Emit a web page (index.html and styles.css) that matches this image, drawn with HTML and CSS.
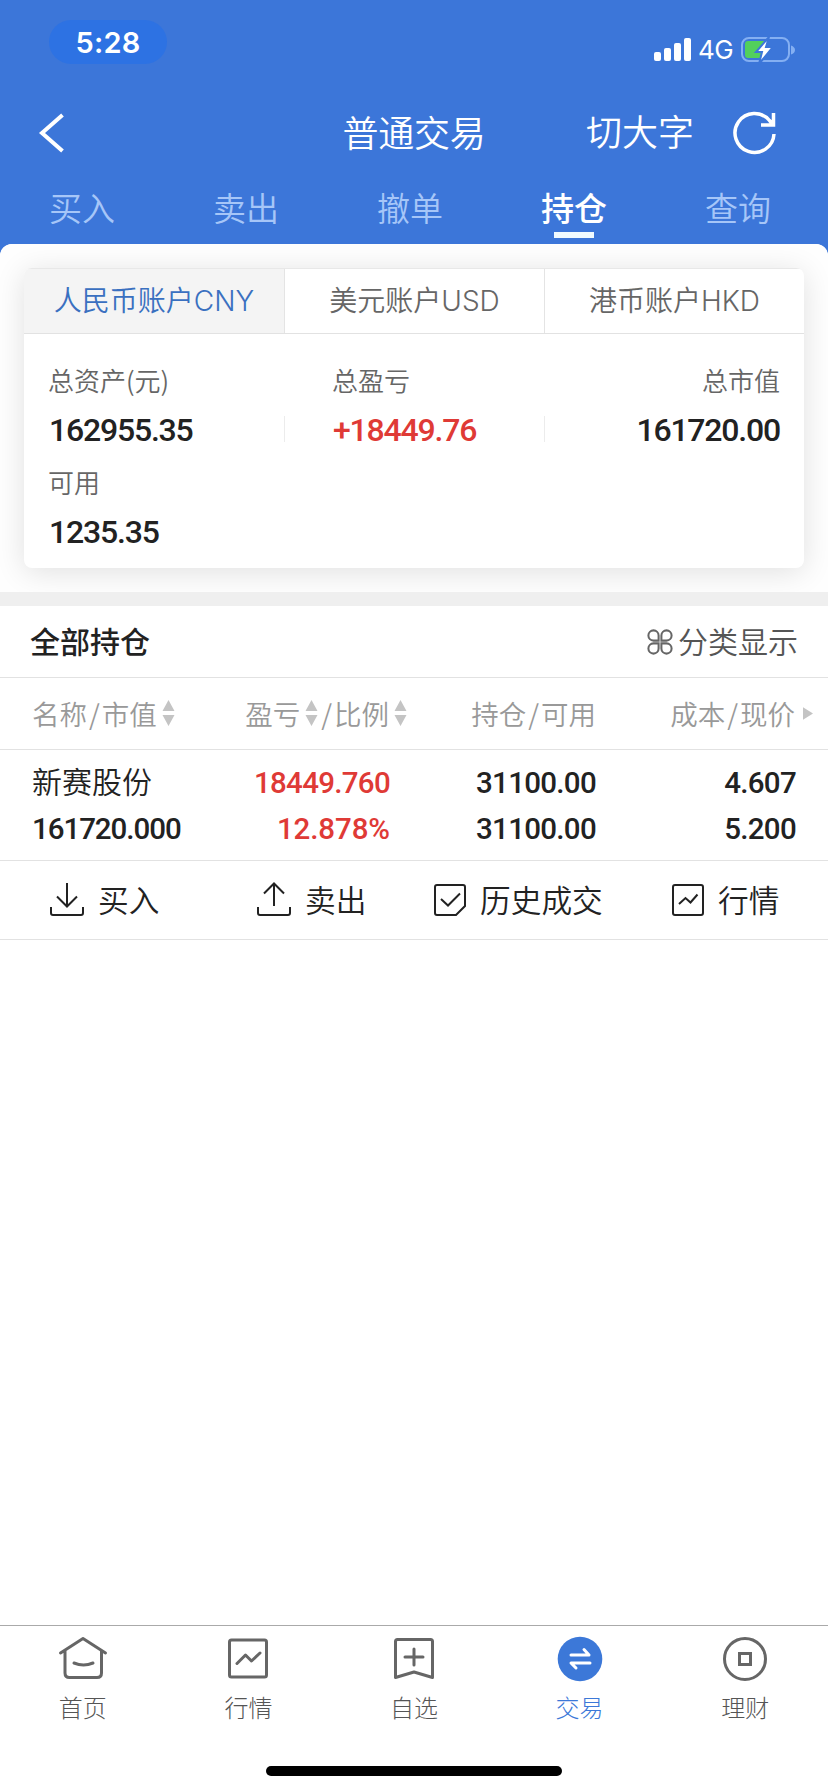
FILE: index.html
```html
<!DOCTYPE html>
<html lang="zh-CN">
<head>
<meta charset="utf-8">
<title>普通交易</title>
<link rel="stylesheet" href="styles.css">
</head>
<body>
<div class="app">
  <header class="header">
    <div class="status">
      <span class="clock">5:28</span>
      <div class="signals">
        <svg width="38" height="24" viewBox="0 0 38 24" fill="#fff"><rect x="0" y="14" width="7" height="9" rx="2"/><rect x="10" y="10" width="7" height="13" rx="2"/><rect x="20" y="5" width="7" height="18" rx="2"/><rect x="30" y="0" width="7" height="23" rx="2"/></svg>
        <span class="network">4G</span>
        <svg width="54" height="28" viewBox="0 0 54 28"><rect x="1" y="2" width="47" height="23" rx="7" fill="none" stroke="#84aff2" stroke-width="2"/><path d="M50 9.500q4 1.500 4 4.500t-4 4.500z" fill="#84aff2"/><path d="M7 5H26L17 16H21L19 22H7Q4 22 4 19V8Q4 5 7 5Z" fill="#52d05c"/><path d="M28 1L15 16H21L18 28L32 11H25Z" fill="#fff" stroke="#3c76d9" stroke-width="2"/></svg>
      </div>
    </div>
    <div class="titlebar">
      <svg class="back" width="26" height="42" viewBox="0 0 26 42" fill="none" stroke="#fff" stroke-width="4"><path d="M23.500 3L3 21L23.500 39"/></svg>
      <h1 class="title">普通交易</h1>
      <div class="tools">
        <span>切大字</span>
        <svg width="44" height="44" viewBox="0 0 44 44" fill="none" stroke="#fff" stroke-width="3.500"><path d="M41 23A19.500 19.500 0 1 1 36.500 9.500L40 13.500M40.500 2V14H28"/></svg>
      </div>
    </div>
    <nav class="tabs">
      <span>买入</span><span>卖出</span><span>撤单</span><span class="active">持仓</span><span>查询</span>
    </nav>
  </header>

  <main class="sheet">
    <section class="summary">
      <div class="card">
        <div class="accounts">
          <span class="selected">人民币账户CNY</span><span>美元账户USD</span><span>港币账户HKD</span>
        </div>
        <dl class="figures">
          <div><dt>总资产(元)</dt><dd>162955.35</dd></div>
          <div class="profit"><dt>总盈亏</dt><dd class="up">+18449.76</dd></div>
          <div class="market"><dt>总市值</dt><dd>161720.00</dd></div>
          <div><dt>可用</dt><dd>1235.35</dd></div>
        </dl>
      </div>
    </section>

    <section class="holdings">
      <div class="heading">
        <h2>全部持仓</h2>
        <div class="classify">
          <svg width="26" height="26" viewBox="0 0 28 28" fill="none" stroke="#666" stroke-width="2.200"><path d="M12.500 12.500H7A5.500 5.500 0 1 1 12.500 7ZM15.500 12.500V7A5.500 5.500 0 1 1 21 12.500ZM12.500 15.500V21A5.500 5.500 0 1 1 7 15.500ZM15.500 15.500H21A5.500 5.500 0 1 1 15.500 21Z"/></svg>
          <span>分类显示</span>
        </div>
      </div>
      <div class="row columns">
        <span class="name">名称<i class="slash">/</i>市值<svg class="sort" width="13" height="26" viewBox="0 0 13 26"><path d="M6.500 0L12.500 11H.5ZM6.500 26L12.500 15H.5Z"/></svg></span>
        <span class="hang-sort">盈亏<svg class="sort" width="13" height="26" viewBox="0 0 13 26"><path d="M6.500 0L12.500 11H.5ZM6.500 26L12.500 15H.5Z"/></svg><i class="slash">/</i>比例<svg class="sort" width="13" height="26" viewBox="0 0 13 26"><path d="M6.500 0L12.500 11H.5ZM6.500 26L12.500 15H.5Z"/></svg></span>
        <span>持仓<i class="slash">/</i>可用</span>
        <span class="hang-more">成本<i class="slash">/</i>现价<svg class="more" width="10" height="13" viewBox="0 0 11 14"><path d="M0 0L11 7L0 14Z"/></svg></span>
      </div>
      <div class="row stock">
        <b class="name stock-name">新赛股份</b><b class="up">18449.760</b><b>31100.00</b><b>4.607</b>
        <b class="name">161720.000</b><b class="up percent">12.878%</b><b>31100.00</b><b>5.200</b>
      </div>
      <div class="actions">
        <span><svg width="36" height="36" viewBox="0 0 36 36"><path d="M18 1V24M8 14.500L18 24.500L28 14.500M2 25V31Q2 33 4 33H32Q34 33 34 31V25"/></svg>买入</span>
        <span><svg width="36" height="36" viewBox="0 0 36 36"><path d="M18 24V1.500M8 11.500L18 1.500L28 11.500M2 25V31Q2 33 4 33H32Q34 33 34 31V25"/></svg>卖出</span>
        <span><svg width="34" height="34" viewBox="0 0 34 34"><path d="M4 2H30Q32 2 32 4V23L23 32H4Q2 32 2 30V4Q2 2 4 2ZM8 16L15 22.500L27 10.500"/></svg>历史成交</span>
        <span><svg width="34" height="34" viewBox="0 0 34 34"><rect x="2" y="2" width="30" height="30" rx="2"/><path d="M8 21L14.500 15L19.500 19.500L26.500 11.500"/></svg>行情</span>
      </div>
    </section>
  </main>

  <footer class="bottom">
    <nav class="dock">
      <span><svg width="50" height="50" viewBox="0 0 50 50"><path d="M2.500 18L25 3.500L47.500 18M7 15.500V38Q7 42.500 11.500 42.500H39Q43.500 42.500 43.500 38V15.500M16 28Q25.500 32 35 28"/></svg>首页</span>
      <span><svg width="50" height="50" viewBox="0 0 50 50"><rect x="6.500" y="5" width="37" height="37" rx="2"/><path d="M14 28.500L22.500 20L28.500 26L37 18"/></svg>行情</span>
      <span><svg width="50" height="50" viewBox="0 0 50 50"><path d="M8.500 4.500H41.500Q43.500 4.500 43.500 6.500V42.500L25 37L6.500 42.500V6.500Q6.500 4.500 8.500 4.500ZM25 14V30M16 22H34"/></svg>自选</span>
      <span class="current"><svg width="50" height="50" viewBox="0 0 50 50"><circle cx="25" cy="24" r="22.300" fill="#3c78d8" stroke="none"/><path stroke="#fff" d="M16 20H34L29 14.500M35 28H16L21 33"/></svg>交易</span>
      <span><svg width="50" height="50" viewBox="0 0 50 50"><circle cx="25" cy="24" r="20.500"/><rect x="19.500" y="18.500" width="11" height="11" stroke-linejoin="miter"/></svg>理财</span>
    </nav>
    <div class="home-bar"></div>
  </footer>
</div>
</body>
</html>
```
FILE: styles.css
```css
* { box-sizing: border-box; margin: 0; padding: 0; }

body {
  font-family: "Noto Sans CJK SC", sans-serif;
  font-weight: 350;
  color: #222;
  background: #3c76d9;
}

svg { display: block; flex: none; overflow: visible; }

.app { width: 828px; height: 1792px; display: flex; flex-direction: column; }

/* Header */
.header { height: 244px; color: #fff; background: #3c76d9; }
.status { height: 92px; padding: 20px 33px 0 49px; display: flex; justify-content: space-between; align-items: flex-start; }
.clock {
  width: 118px; height: 44px; border-radius: 22px; background: #2d72e3;
  font: 600 29px/46px Inter, sans-serif; text-align: center; letter-spacing: .2px;
}
.signals { display: flex; align-items: center; margin-top: 16px; height: 28px; }
.network { font: 400 26px/28px Inter, sans-serif; margin: 0 8px 0 6px; letter-spacing: -.6px; }
.titlebar { height: 80px; padding: 0 51px 0 39px; display: grid; grid-template-columns: 1fr auto 1fr; align-items: center; font-size: 36px; }
.title { font-size: 36px; font-weight: 350; line-height: 76px; margin: 0 0 4px 12px; letter-spacing: -.3px; }
.tools { display: flex; align-items: center; justify-content: flex-end; gap: 39px; line-height: 76px; }
.tools span { margin-bottom: 5px; }
.tabs { display: grid; grid-template-columns: repeat(5, 1fr); padding-right: 8px; height: 72px; }
.tabs span { display: flex; flex-direction: column; align-items: center; font-size: 33px; line-height: 60px; padding-top: 5px; color: #a6c6f8; }
.tabs .active { color: #fff; font-weight: 500; }
.tabs .active::after { content: ""; width: 40px; height: 6px; margin-top: -5px; background: #f1fbff; }

/* Account summary */
.sheet { flex: 1; background: #fff; border-radius: 12px 12px 0 0; overflow: hidden; }
.summary { padding: 24px 24px 0; height: 348px; background: #fefefe; }
.card { height: 300px; border-radius: 8px; background: #fff; box-shadow: 0 4px 30px rgba(0, 0, 0, .12); overflow: hidden; }
.accounts { display: grid; grid-template-columns: repeat(3, 1fr); height: 66px; border-top: 1px solid #e8e8e8; border-bottom: 1px solid #e2e2e2; }
.accounts span { font-family: Inter, "Noto Sans CJK SC", sans-serif; font-size: 28px; line-height: 65px; height: 64px; text-align: center; color: #666; }
.accounts span + span { border-left: 1px solid #e4e4e4; }
.accounts .selected { background: #f4f4f4; color: #3a70c0; }
.figures { display: grid; grid-template-columns: 260px 260px 260px; grid-auto-rows: 102px; padding-top: 21px; }
.figures > div { padding-left: 24px; }
.figures dt { font-size: 26px; line-height: 50px; color: #666; }
.figures dd { font: 500 32px/50px Roboto, sans-serif; letter-spacing: -1.200px; padding-left: 1px; }
.figures .profit { padding-left: 48px; }
.figures .profit, .figures .market { background: linear-gradient(#ececec, #ececec) 0 61px / 1px 26px no-repeat; }
.figures .market { padding-right: 24px; text-align: right; }
.up, .figures .up { color: #df3a36; }

/* Holdings */
.holdings { border-top: 14px solid #efefef; }
.heading { display: flex; justify-content: space-between; align-items: center; height: 72px; padding: 0 30px 0 30px; border-bottom: 1px solid #e2e2e2; }
.heading h2 { font-size: 30px; font-weight: 500; line-height: 68px; margin-bottom: 3px; }
.classify { display: flex; align-items: center; gap: 5px; font-size: 30px; line-height: 68px; color: #555; }
.classify span { margin-bottom: 3px; }
.row { display: grid; grid-template-columns: 180px 178px 206px 200px; padding-left: 32px; text-align: right; border-bottom: 1px solid #e2e2e2; }
.name { text-align: left; }
.columns { height: 72px; font-size: 27.500px; line-height: 68px; color: #999; }
.columns span { display: flex; align-items: center; justify-content: flex-end; padding-bottom: 1px; }
.columns .name { justify-content: flex-start; }
.sort, .more { fill: #c4c4c4; }
.sort { margin-left: 5px; }
.slash { font-style: normal; margin: 0 2px; }
.sort + .slash { margin-left: 3px; }
.columns .hang-sort { margin-right: -17px; margin-left: -40px; }
.columns .hang-more { margin-right: -17px; }
.more { margin-left: 8px; }
.stock { height: 111px; grid-auto-rows: 46px; padding-top: 10px; align-items: center; }
.stock b { font: 500 29.500px/46px Roboto, sans-serif; letter-spacing: -.7px; }
.stock .name { letter-spacing: -1.050px; }
.stock .percent { letter-spacing: -.1px; }
.stock .stock-name { font: 350 30px/46px "Noto Sans CJK SC", sans-serif; letter-spacing: 0; margin-top: -6px; }
.actions { display: grid; grid-template-columns: 207px 177px 238px 1fr; height: 79px; padding-left: 49px; border-bottom: 1px solid #e2e2e2; }
.actions span { display: flex; align-items: center; gap: 13px; font-size: 30.700px; line-height: 76px; height: 76px; }
.actions svg { fill: none; stroke: #222; stroke-width: 2; margin-top: 2px; }

/* Bottom navigation */
.bottom { height: 167px; background: #fff; border-top: 1px solid #aaa; }
.dock { display: grid; grid-template-columns: repeat(5, 1fr); height: 140px; padding-top: 9px; }
.dock span { display: flex; flex-direction: column; align-items: center; font-size: 24px; font-weight: 300; line-height: 43px; color: #555; }
.dock svg { fill: none; stroke: #666; stroke-width: 3; stroke-linecap: round; stroke-linejoin: round; }
.dock .current { color: #3c78d8; }
.home-bar { width: 296px; height: 10px; margin: 0 auto; border-radius: 5px; background: #000; }
```
